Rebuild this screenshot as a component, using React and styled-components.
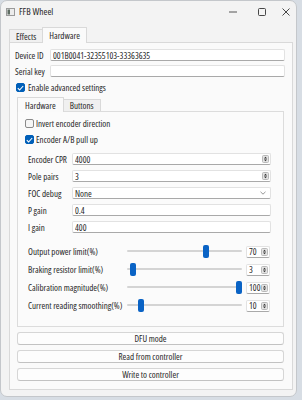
import React from 'react';
import styled, { createGlobalStyle } from 'styled-components';

const GlobalStyle = createGlobalStyle`
  html, body { margin: 0; padding: 0; }
  body {
    background: #d7dde4;
    font-family: "Open Sans", "Noto Sans", sans-serif;
    font-stretch: condensed;
    font-size: 9px;
    font-weight: 380;
    color: #262626;
  }
  * { box-sizing: border-box; }
`;

const Window = styled.div`
  width: 297px;
  height: 397px;
  background: #f3f3f3;
  border: 1px solid #c4c7cb;
  border-radius: 7px;
  display: flex;
  flex-direction: column;
  overflow: hidden;
`;

const TitleBar = styled.div`
  height: 21px;
  flex-shrink: 0;
  display: flex;
  align-items: center;
  padding-left: 5px;
`;

const Title = styled.span`
  margin-left: 4px;
  font-size: 9.5px;
`;

const Controls = styled.div`
  margin-left: auto;
  display: flex;
  height: 100%;
`;

const CtrlButton = styled.div`
  width: ${p => p.$w}px;
  height: 100%;
  display: flex;
  align-items: center;
  justify-content: center;
`;

const Body = styled.div`
  flex: 1;
  display: flex;
  flex-direction: column;
  padding: 5px 3px 6px 8px;
`;

const TabBar = styled.div`
  display: flex;
  align-items: flex-end;
  height: ${p => p.$h}px;
  flex-shrink: 0;
`;

const Tab = styled.div`
  height: ${p => (p.$active ? p.$h + 1 : p.$h - 2)}px;
  padding: 0 ${p => p.$pad}px;
  display: flex;
  align-items: center;
  border: 1px solid #d9d9d9;
  border-bottom: none;
  background: ${p => (p.$active ? '#fafafa' : '#f0f0f0')};
  margin-bottom: ${p => (p.$active ? -1 : 0)}px;
  position: relative;
  z-index: ${p => (p.$active ? 2 : 1)};
  & + & { margin-left: -1px; }
  border-radius: 1px 1px 0 0;
`;

const Pane = styled.div`
  flex: 1;
  display: flex;
  flex-direction: column;
  border: 1px solid #d9d9d9;
  background: #fafafa;
  padding: 6px 7px 0 5px;
`;

const FieldRow = styled.div`
  display: flex;
  align-items: center;
  height: 12px;
  margin-top: ${p => p.$mt || 0}px;
`;

const Label = styled.span`
  width: ${p => p.$w}px;
  flex-shrink: 0;
  white-space: nowrap;
`;

const Field = styled.div`
  height: 12px;
  display: flex;
  align-items: center;
  background: #ffffff;
  border: 1px solid #e2e2e2;
  border-bottom-color: #a9a9a9;
  border-radius: 2px;
  padding: 0 1px 0 2px;
  width: ${p => (p.$w ? `${p.$w}px` : 'auto')};
  flex: ${p => (p.$w ? '0 0 auto' : '1')};
`;

const FieldInput = styled.input`
  flex: 1;
  min-width: 0;
  border: none;
  outline: none;
  background: transparent;
  padding: 0;
  font: inherit;
  color: inherit;
  height: 100%;
`;

const CheckRow = styled.label`
  display: flex;
  align-items: center;
  gap: ${p => p.$gap || 3}px;
  height: 9px;
  margin-top: ${p => p.$mt || 0}px;
  margin-left: ${p => p.$ml || 0}px;
  white-space: nowrap;
`;

const Box = styled.span`
  width: 9px;
  height: 9px;
  border-radius: 2px;
  display: flex;
  align-items: center;
  justify-content: center;
  background: ${p => (p.$checked ? '#005fb8' : '#f6f6f6')};
  border: 1px solid ${p => (p.$checked ? '#005fb8' : '#8a8a8a')};
`;

const InnerWrap = styled.div`
  margin: 5px 1px 0 2px;
  display: flex;
  flex-direction: column;
`;

const InnerPane = styled.div`
  height: 216px;
  border: 1px solid #dcdcdc;
  background: #fbfbfb;
  padding: 7px 12px 0 7px;
  display: flex;
  flex-direction: column;
`;

const Form = styled.div`
  display: flex;
  flex-direction: column;
  gap: ${p => p.$gap}px;
  margin: ${p => p.$mt}px 0 0 3px;
`;

const SliderRow = styled.div`
  display: flex;
  align-items: center;
  height: 13px;
`;

const SliderTrack = styled.div`
  position: relative;
  width: 115px;
  height: 13px;
  flex-shrink: 0;
  margin-right: 4px;
  &::before {
    content: '';
    position: absolute;
    left: 0;
    right: 0;
    top: 5px;
    height: 2px;
    border-radius: 1px;
    background: #d4d4d4;
  }
`;

const Handle = styled.span`
  position: absolute;
  top: 0;
  width: 6px;
  height: 13px;
  border-radius: 2px;
  background: #0a63c5;
`;

const Buttons = styled.div`
  margin: 5px 1px 0 2px;
  display: flex;
  flex-direction: column;
  gap: 5px;
`;

const PushButton = styled.button`
  height: 13px;
  padding: 0;
  border: 1px solid #d6d6d6;
  border-bottom-color: #c2c2c2;
  border-radius: 3px;
  background: #fdfdfd;
  font: inherit;
  color: inherit;
  display: flex;
  align-items: center;
  justify-content: center;
`;

const Check = () => (
  <svg width="7" height="6" viewBox="0 0 7 6">
    <polyline points="0.8,3.2 2.6,5 6.2,1" fill="none" stroke="#fff" strokeWidth="1.1" />
  </svg>
);

const SpinArrows = () => (
  <svg width="7" height="8" viewBox="0 0 7 8">
    <rect x="0.5" y="0.5" width="6" height="7" rx="1" fill="#e3e3e3" stroke="#b9b9b9" />
    <polygon points="1.9,3.4 3.5,1.7 5.1,3.4" fill="#333" />
    <polygon points="1.9,4.6 3.5,6.3 5.1,4.6" fill="#333" />
  </svg>
);

const Chevron = () => (
  <svg width="6" height="4" viewBox="0 0 6 4" style={{ marginRight: 3 }}>
    <polyline points="0.5,0.8 3,3.2 5.5,0.8" fill="none" stroke="#8a8a8a" strokeWidth="0.9" />
  </svg>
);

const AppIcon = () => (
  <svg width="9" height="8" viewBox="0 0 9 8">
    <rect x="0.5" y="0.5" width="8" height="7" fill="#ececec" stroke="#9a9a9a" />
    <rect x="1.5" y="1.5" width="2.5" height="5" fill="#5f6d63" />
  </svg>
);

const CheckBox = ({ checked, label, mt, ml, gap }) => (
  <CheckRow $mt={mt} $ml={ml} $gap={gap}>
    <Box $checked={checked}>{checked && <Check />}</Box>
    {label}
  </CheckRow>
);

const formRows = [
  { label: 'Encoder CPR', value: '4000', kind: 'spin' },
  { label: 'Pole pairs', value: '3', kind: 'spin' },
  { label: 'FOC debug', value: 'None', kind: 'combo' },
  { label: 'P gain', value: '0.4' },
  { label: 'I gain', value: '400' },
];

const sliders = [
  { label: 'Output power limit(%)', value: 70 },
  { label: 'Braking resistor limit(%)', value: 3 },
  { label: 'Calibration magnitude(%)', value: 100 },
  { label: 'Current reading smoothing(%)', value: 10 },
];

export default function App() {
  return (
    <>
      <GlobalStyle />
      <Window>
        <TitleBar>
          <AppIcon />
          <Title>FFB Wheel</Title>
          <Controls>
            <CtrlButton $w={28}>
              <svg width="8" height="2" viewBox="0 0 8 2"><line x1="0" y1="1" x2="8" y2="1" stroke="#444" strokeWidth="0.9" /></svg>
            </CtrlButton>
            <CtrlButton $w={29}>
              <svg width="8" height="8" viewBox="0 0 8 8"><rect x="0.5" y="0.5" width="7" height="7" rx="1" fill="none" stroke="#333" strokeWidth="0.9" /></svg>
            </CtrlButton>
            <CtrlButton $w={20}>
              <svg width="8" height="8" viewBox="0 0 8 8"><path d="M0.5 0.5 L7.5 7.5 M7.5 0.5 L0.5 7.5" stroke="#333" strokeWidth="0.9" /></svg>
            </CtrlButton>
          </Controls>
        </TitleBar>
        <Body>
          <TabBar $h={15}>
            <Tab $h={15} $pad={6}>Effects</Tab>
            <Tab $h={15} $pad={6} $active>Hardware</Tab>
          </TabBar>
          <Pane>
            <FieldRow>
              <Label $w={35}>Device ID</Label>
              <Field><FieldInput readOnly value="001B0041-32355103-33363635" /></Field>
            </FieldRow>
            <FieldRow $mt={4}>
              <Label $w={35}>Serial key</Label>
              <Field><FieldInput readOnly value="" /></Field>
            </FieldRow>
            <CheckBox checked label="Enable advanced settings" mt={6} ml={1} />
            <InnerWrap>
              <TabBar $h={14}>
                <Tab $h={14} $pad={7} $active>Hardware</Tab>
                <Tab $h={14} $pad={6}>Buttons</Tab>
              </TabBar>
              <InnerPane>
                <CheckBox label="Invert encoder direction" gap={2} />
                <CheckBox checked label="Encoder A/B pull up" mt={7} gap={2} />
                <Form $gap={5} $mt={9}>
                  {formRows.map(r => (
                    <FieldRow key={r.label}>
                      <Label $w={44}>{r.label}</Label>
                      <Field>
                        <FieldInput readOnly value={r.value} />
                        {r.kind === 'spin' && <SpinArrows />}
                        {r.kind === 'combo' && <Chevron />}
                      </Field>
                    </FieldRow>
                  ))}
                </Form>
                <Form $gap={5} $mt={12}>
                  {sliders.map(s => (
                    <SliderRow key={s.label}>
                      <Label $w={99}>{s.label}</Label>
                      <SliderTrack>
                        <Handle style={{ left: `${(s.value / 100) * 109}px` }} />
                      </SliderTrack>
                      <Field $w={24}>
                        <FieldInput readOnly value={s.value} />
                        <SpinArrows />
                      </Field>
                    </SliderRow>
                  ))}
                </Form>
              </InnerPane>
            </InnerWrap>
            <Buttons>
              <PushButton>DFU mode</PushButton>
              <PushButton>Read from controller</PushButton>
              <PushButton>Write to controller</PushButton>
            </Buttons>
          </Pane>
        </Body>
      </Window>
    </>
  );
}
